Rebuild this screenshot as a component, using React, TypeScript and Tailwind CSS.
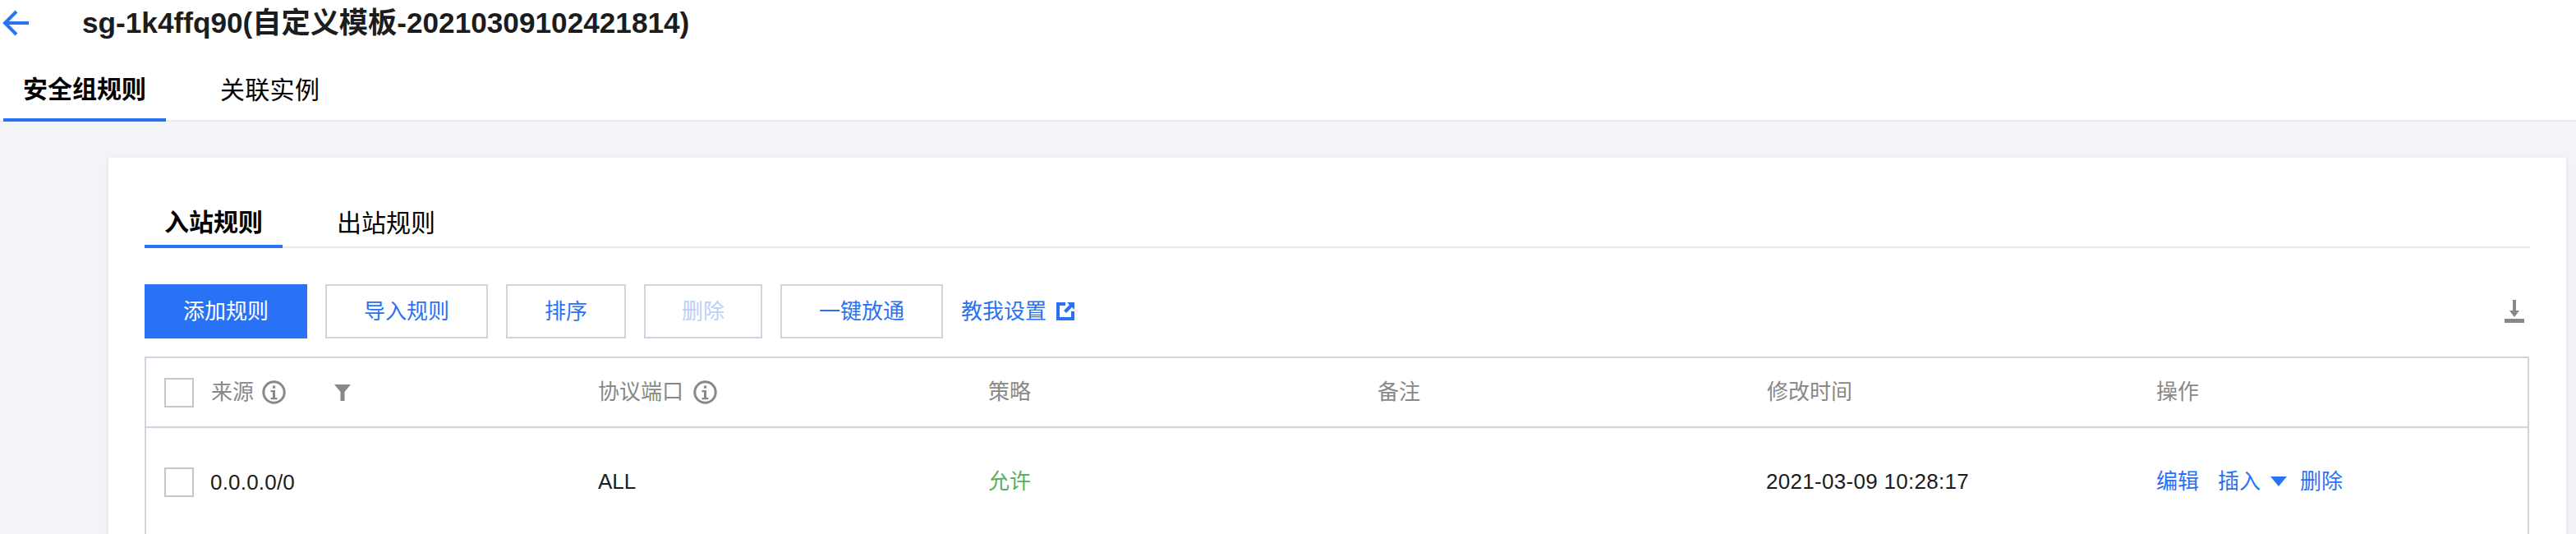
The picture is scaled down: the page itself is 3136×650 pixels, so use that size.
import React from "react";

const font = { fontFamily: '"Liberation Sans","Noto Sans CJK SC",sans-serif' };

function Info() {
  return (
    <svg width="29" height="29" viewBox="0 0 29 29" className="shrink-0">
      <circle cx="14.5" cy="14.5" r="12.7" fill="none" stroke="#888" strokeWidth="3" />
      <rect x="13" y="6.5" width="3.2" height="3.2" fill="#888" />
      <path d="M10.5 12h5.5v9h2.5v2.2h-8v-2.2h2.5v-6.800h-2.500z" fill="#888" />
    </svg>
  );
}

function Checkbox() {
  return <div className="w-9 h-9 border-2 border-[#c6c6c6] bg-white shrink-0" />;
}

function Btn({ children, cls }: { children: React.ReactNode; cls: string }) {
  return (
    <div className={`h-[66px] flex items-center justify-center border-2 border-[#d0d4df] bg-white text-[26px] ${cls}`}>
      {children}
    </div>
  );
}

const gridCls = "grid grid-cols-[530px_473px_474px_474px_474px_1fr] items-center text-[26px]";

export default function App() {
  return (
    <div className="w-[3136px] h-[650px] overflow-hidden bg-[#f3f4f7] flex flex-col" style={font}>
      <div className="h-[148px] bg-white border-b-2 border-[#e7eaef] shrink-0 flex flex-col">
        <div className="h-[56px] flex items-center">
          <svg width="40" height="50" viewBox="0 0 40 50" className="shrink-0">
            <path d="M35 25H7M20 11L6 25l14 14" fill="none" stroke="#2a72f5" strokeWidth="4" />
          </svg>
          <span className="ml-[60px] text-[35.2px] font-bold text-[#1c1c1c] whitespace-nowrap">
            sg-1k4ffq90(自定义模板-20210309102421814)
          </span>
        </div>
        <div className="flex flex-1 items-stretch text-[30px] text-black pl-1">
          <div className="w-[198px] mb-[-2px] border-b-4 border-[#2a72f5] flex items-center justify-center font-bold pt-[17px]">
            安全组规则
          </div>
          <div className="ml-[66px] flex items-center pt-[17px] tracking-[0.3px]">关联实例</div>
        </div>
      </div>

      <div className="ml-[132px] mr-3 mt-11 flex-1 bg-white shadow-[0_2px_6px_rgba(54,58,80,0.12)] pt-[54px] px-11">
        <div className="flex h-[56px] border-b-2 border-[#e7eaef] text-[30px] text-black">
          <div className="w-[168px] mb-[-2px] border-b-4 border-[#2a72f5] flex items-center justify-center font-bold pb-1">
            入站规则
          </div>
          <div className="ml-[66px] flex items-center pb-1">出站规则</div>
        </div>

        <div className="flex items-center mt-11 gap-[22px] text-[#2a72f5]">
          <div className="w-[198px] h-[66px] flex items-center justify-center bg-[#2a72f5] text-white text-[26px]">
            添加规则
          </div>
          <Btn cls="w-[198px]">导入规则</Btn>
          <Btn cls="w-[146px]">排序</Btn>
          <Btn cls="w-[144px] text-[#b8d0fb]">删除</Btn>
          <Btn cls="w-[198px]">一键放通</Btn>
          <div className="flex items-center text-[26px] gap-3">
            <span>教我设置</span>
            <svg width="22" height="22" viewBox="0 0 22 22">
              <path d="M0 0h11v4H4v14h14v-7h4v11H0z" fill="#2a72f5" />
              <path d="M13 0h9v9l-3-3-7 7-3-3 7-7z" fill="#2a72f5" />
            </svg>
          </div>
          <svg width="24" height="28" viewBox="0 0 24 28" className="ml-auto mr-[7px]">
            <path d="M10 0h4v13h4l-6 8-6-8h4z" fill="#888" />
            <rect x="0" y="23" width="24" height="5" fill="#888" />
          </svg>
        </div>

        <div className="mt-[22px] border-x-2 border-t-2 border-[#d0d4df] w-[2903px]">
          <div className={`${gridCls} h-[85px] border-b-2 border-[#d0d4df] text-[#888]`}>
            <div className="pl-[22px] flex items-center">
              <Checkbox />
              <span className="ml-[21px]">来源</span>
              <span className="ml-[10px]"><Info /></span>
              <svg width="20" height="20" viewBox="0 0 20 20" className="ml-[59px] shrink-0">
                <path d="M0 0h20l-7.500 9v11h-5V9z" fill="#888" />
              </svg>
            </div>
            <div className="pl-5 flex items-center gap-[12px]">
              <span>协议端口</span>
              <Info />
            </div>
            <div className="pl-[22px]">策略</div>
            <div className="pl-[22px]">备注</div>
            <div className="pl-[22px]">修改时间</div>
            <div className="pl-[22px]">操作</div>
          </div>
          <div className={`${gridCls} h-[130px] text-[#1c1c1c]`}>
            <div className="pl-[22px] flex items-center pt-[2px]">
              <Checkbox />
              <span className="ml-[20px] tracking-[0.2px]">0.0.0.0/0</span>
            </div>
            <div className="pl-5">ALL</div>
            <div className="pl-[22px] text-[#56b05c]">允许</div>
            <div className="pl-[22px]" />
            <div className="pl-[21px] tracking-[0.3px]">2021-03-09 10:28:17</div>
            <div className="pl-[22px] flex items-center text-[#2a72f5]">
              <span>编辑</span>
              <span className="ml-[23px]">插入</span>
              <svg width="20" height="12" viewBox="0 0 20 12" className="ml-3">
                <path d="M0 0h20L10 12z" fill="#2a72f5" />
              </svg>
              <span className="ml-4">删除</span>
            </div>
          </div>
        </div>
      </div>
    </div>
  );
}
